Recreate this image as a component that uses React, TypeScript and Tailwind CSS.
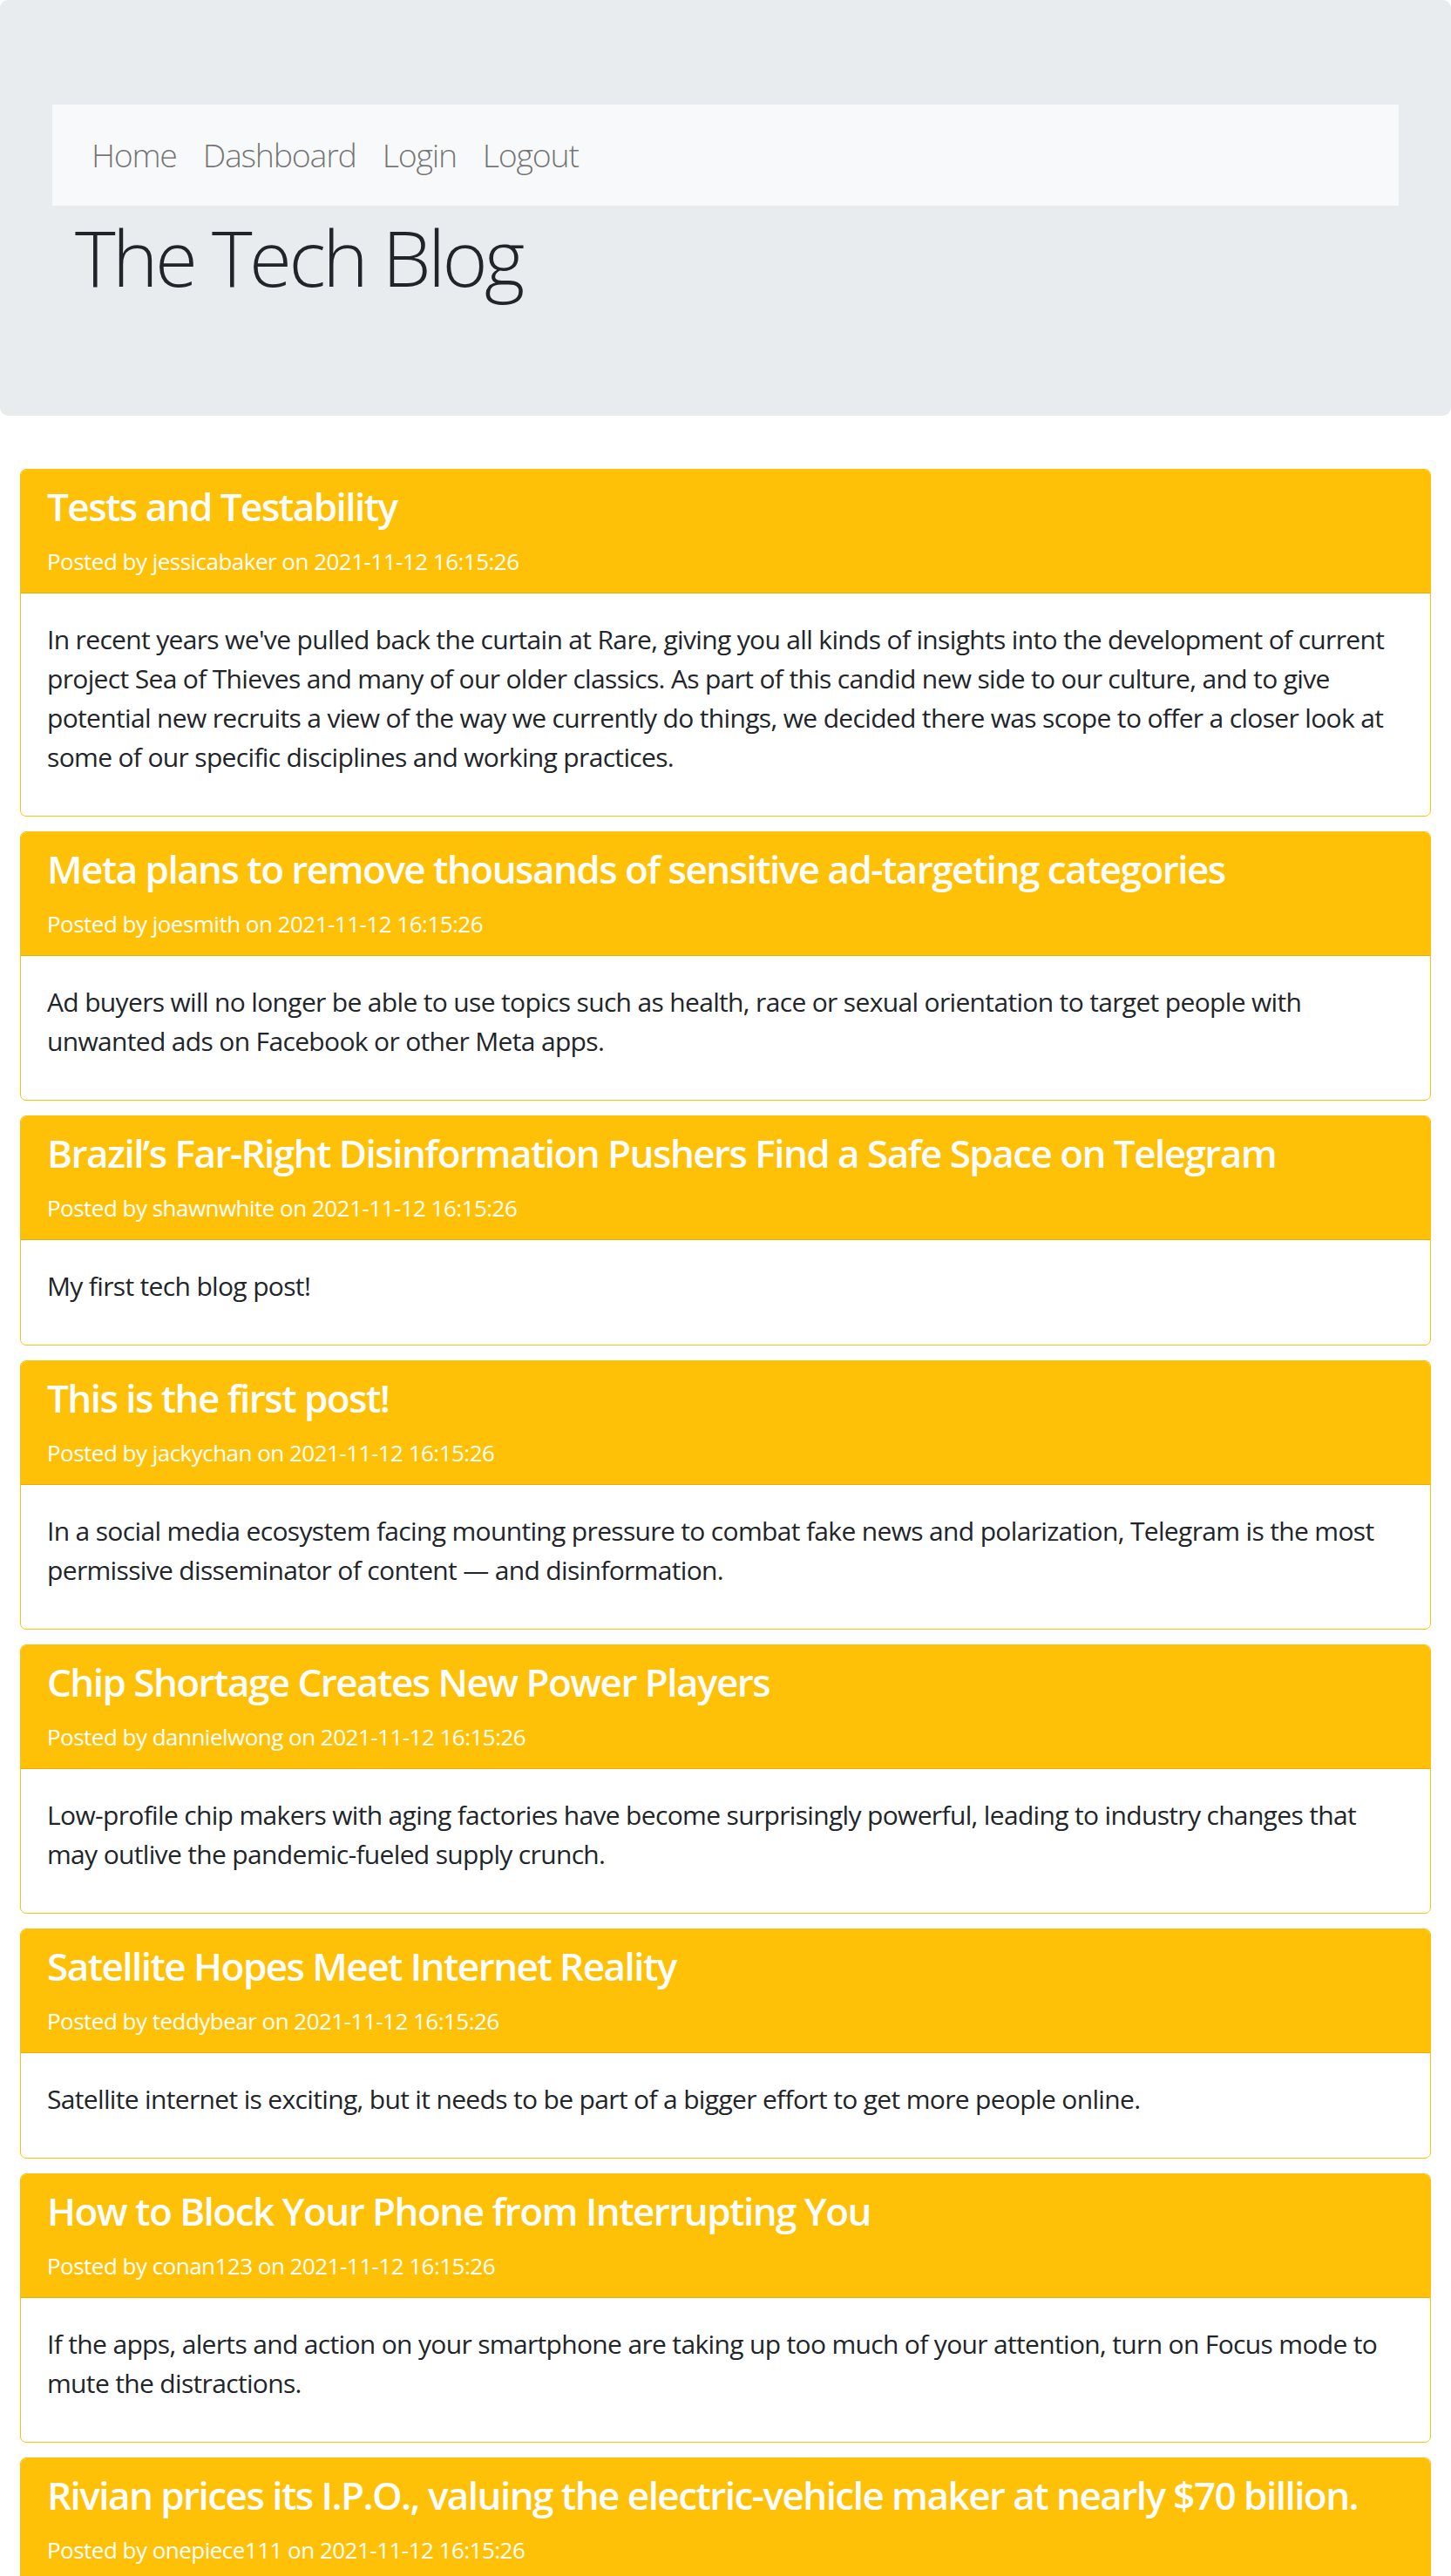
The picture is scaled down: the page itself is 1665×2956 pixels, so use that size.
import React from "react";

interface Post {
    title: string;
    author: string;
    date: string;
    body: string;
}

const posts: Post[] = [
    {
        title: "Tests and Testability",
        author: "jessicabaker",
        date: "2021-11-12 16:15:26",
        body: "In recent years we've pulled back the curtain at Rare, giving you all kinds of insights into the development of current project Sea of Thieves and many of our older classics. As part of this candid new side to our culture, and to give potential new recruits a view of the way we currently do things, we decided there was scope to offer a closer look at some of our specific disciplines and working practices.",
    },
    {
        title: "Meta plans to remove thousands of sensitive ad-targeting categories",
        author: "joesmith",
        date: "2021-11-12 16:15:26",
        body: "Ad buyers will no longer be able to use topics such as health, race or sexual orientation to target people with unwanted ads on Facebook or other Meta apps.",
    },
    {
        title: "Brazil’s Far-Right Disinformation Pushers Find a Safe Space on Telegram",
        author: "shawnwhite",
        date: "2021-11-12 16:15:26",
        body: "My first tech blog post!",
    },
    {
        title: "This is the first post!",
        author: "jackychan",
        date: "2021-11-12 16:15:26",
        body: "In a social media ecosystem facing mounting pressure to combat fake news and polarization, Telegram is the most permissive disseminator of content — and disinformation.",
    },
    {
        title: "Chip Shortage Creates New Power Players",
        author: "dannielwong",
        date: "2021-11-12 16:15:26",
        body: "Low-profile chip makers with aging factories have become surprisingly powerful, leading to industry changes that may outlive the pandemic-fueled supply crunch.",
    },
    {
        title: "Satellite Hopes Meet Internet Reality",
        author: "teddybear",
        date: "2021-11-12 16:15:26",
        body: "Satellite internet is exciting, but it needs to be part of a bigger effort to get more people online.",
    },
    {
        title: "How to Block Your Phone from Interrupting You",
        author: "conan123",
        date: "2021-11-12 16:15:26",
        body: "If the apps, alerts and action on your smartphone are taking up too much of your attention, turn on Focus mode to mute the distractions.",
    },
    {
        title: "Rivian prices its I.P.O., valuing the electric-vehicle maker at nearly $70 billion.",
        author: "onepiece111",
        date: "2021-11-12 16:15:26",
        body: "The electric truck maker is set to begin trading on the Nasdaq, in one of the largest public offerings of the year.",
    },
];

const navLinks = ["Home", "Dashboard", "Login", "Logout"];

const App: React.FC = () => {
    return (
        <div className="min-h-screen bg-white text-[#212529] font-['Open_Sans','Noto_Sans',sans-serif]">
            {/* header */}
            <div className="bg-[#e9ecef] rounded-[9px] pt-[120px] pb-[129px] px-[60px] mb-[61px]">
                <nav className="bg-[#f8f9fa] px-[30px] py-[15px] flex">
                    {navLinks.map((link) => (
                        <a
                            key={link}
                            href="#"
                            className="px-[15px] py-[15px] text-[37.5px] leading-[56px] font-light tracking-[-0.033em] text-black/55"
                        >
                            {link}
                        </a>
                    ))}
                </nav>
                <h1 className="mt-[5px] pl-[26px] text-[89px] leading-[107px] font-light tracking-[-0.04em]">The Tech Blog</h1>
            </div>

            {/* posts */}
            <div className="px-[23px]">
                {posts.map((post, index) => (
                    <div key={index} className="mb-[17px] border border-[#ffc107] rounded-[7px] overflow-hidden bg-white">
                        <div className="bg-[#ffc107] text-white px-[30px] pt-[16px] pb-[16px] border-b border-black/10">
                            <h4 className="text-[44px] leading-[52px] font-semibold tracking-[-0.035em]">{post.title}</h4>
                            <p className="mt-[18px] text-[26px] leading-[39px] tracking-[-0.02em]">
                                Posted by {post.author} on {post.date}
                            </p>
                        </div>
                        <div className="px-[30px] pt-[30px] pb-[45px]">
                            <p className="text-[30px] leading-[45px] tracking-[-0.022em]">{post.body}</p>
                        </div>
                    </div>
                ))}
            </div>
        </div>
    );
};

export default App;
